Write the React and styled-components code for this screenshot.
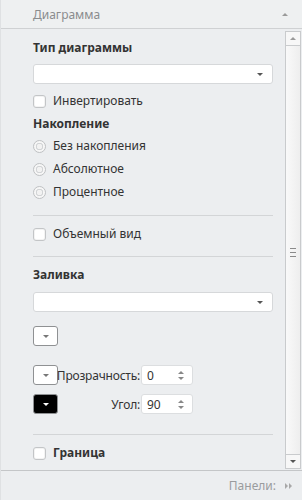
import React from 'react';
import styled, { createGlobalStyle } from 'styled-components';

const GlobalStyle = createGlobalStyle`
  html, body {
    margin: 0;
    padding: 0;
    background: #eceef0;
  }
  body {
    font-family: "Noto Sans", "Open Sans", sans-serif;
    font-size: 12px;
    color: #333;
  }
`;

const Panel = styled.div`
  width: 302px;
  height: 500px;
  display: flex;
  flex-direction: column;
  background: #eceef0;
  border-left: 1px solid #dfe1e3;
  box-sizing: border-box;
`;

const Header = styled.div`
  height: 28px;
  flex: none;
  display: flex;
  align-items: center;
  justify-content: space-between;
  padding: 0 14px 0 32px;
  border-bottom: 1px solid #cfd1d3;
  color: #8a8c8e;
  background: #eef0f1;
`;

const Caret = styled.span`
  width: 0;
  height: 0;
  border-left: 3px solid transparent;
  border-right: 3px solid transparent;
  border-${(p) => (p.$down ? 'top' : 'bottom')}: 3px solid ${(p) => p.$color || '#9a9a9a'};
`;

const Body = styled.div`
  flex: 1;
  display: flex;
  min-height: 0;
`;

const Content = styled.div`
  flex: 1;
  padding: 11px 12px 0 32px;
  display: flex;
  flex-direction: column;
`;

const Title = styled.div`
  font-weight: bold;
  line-height: 16px;
  margin-top: ${(p) => p.$mt || 0}px;
`;

const Select = styled.div`
  height: 20px;
  box-sizing: border-box;
  background: #fff;
  border: 1px solid #d6d8da;
  border-radius: 3px;
  display: flex;
  align-items: center;
  justify-content: flex-end;
  padding-right: 9px;
  margin-top: ${(p) => p.$mt || 0}px;
`;

const Row = styled.label`
  display: flex;
  align-items: center;
  gap: 7px;
  line-height: 16px;
  margin-top: ${(p) => p.$mt || 0}px;
  font-weight: ${(p) => (p.$bold ? 'bold' : 'normal')};
`;

const Check = styled.span`
  width: 13px;
  height: 13px;
  box-sizing: border-box;
  border: 1px solid #c3c5c7;
  border-radius: 3px;
  background: #fff;
  box-shadow: inset 0 0 0 1px #f3f3f3;
  flex: none;
`;

const Radio = styled.span`
  width: 13px;
  height: 13px;
  box-sizing: border-box;
  border: 1px solid #bfc1c3;
  border-radius: 50%;
  background: radial-gradient(circle, #f2f2f2 0 2.5px, #d2d4d6 3px 3.5px, #f6f6f6 4px);
  flex: none;
`;

const Divider = styled.div`
  height: 1px;
  background: #d3d5d7;
  margin-top: ${(p) => p.$mt || 0}px;
`;

const ColorButton = styled.div`
  width: 25px;
  height: 20px;
  box-sizing: border-box;
  border: 1px solid #8f9193;
  border-radius: 3px;
  background: ${(p) => (p.$black ? '#000' : '#fff')};
  display: flex;
  align-items: center;
  justify-content: center;
  flex: none;
  margin-top: ${(p) => p.$mt || 0}px;
`;

const FieldRow = styled.div`
  display: flex;
  align-items: center;
  height: 20px;
  margin-top: ${(p) => p.$mt || 0}px;
`;

const FieldLabel = styled.span`
  width: 83px;
  display: flex;
  justify-content: flex-end;
  padding-right: 1px;
  box-sizing: border-box;
  white-space: nowrap;
  letter-spacing: -0.2px;
`;

const Spinner = styled.div`
  width: 52px;
  height: 20px;
  box-sizing: border-box;
  background: #fff;
  border: 1px solid #dcdee0;
  border-radius: 3px;
  display: flex;
  align-items: center;
  justify-content: space-between;
  padding: 0 8px 0 5px;
`;

const Steps = styled.span`
  display: flex;
  flex-direction: column;
  gap: 3px;
`;

const Scrollbar = styled.div`
  width: 15px;
  flex: none;
  margin: 2px 1px 1px 0;
  display: flex;
  flex-direction: column;
  border-left: 1px solid #c9cbcd;
  background: #f3f4f5;
`;

const ScrollButton = styled.div`
  height: 15px;
  box-sizing: border-box;
  border: 1px solid #c9cbcd;
  border-left: none;
  background: #f7f7f7;
  display: flex;
  align-items: center;
  justify-content: center;
  flex: none;
`;

const Thumb = styled.div`
  flex: 1;
  box-sizing: border-box;
  border-right: 1px solid #c9cbcd;
  background: linear-gradient(to right, #f9f9f9, #eeeeee);
  display: flex;
  flex-direction: column;
  align-items: center;
  justify-content: center;
  gap: 3px;
  padding-top: 4px;
`;

const Grip = styled.span`
  width: 6px;
  height: 1px;
  background: #8a8a8a;
`;

const Footer = styled.div`
  height: 29px;
  flex: none;
  border-top: 1px solid #c4c6c8;
  display: flex;
  align-items: center;
  justify-content: flex-end;
  gap: 9px;
  padding-right: 10px;
  color: #9a9c9e;
`;

const Arrows = styled.span`
  display: flex;
  gap: 1px;
`;

const RightCaret = styled.span`
  width: 0;
  height: 0;
  border-top: 3px solid transparent;
  border-bottom: 3px solid transparent;
  border-left: 3px solid #a8a8a8;
`;

export default function App() {
  return (
    <>
      <GlobalStyle />
      <Panel>
        <Header>
          <span>Диаграмма</span>
          <Caret />
        </Header>
        <Body>
          <Content>
            <Title>Тип диаграммы</Title>
            <Select $mt={8}>
              <Caret $down $color="#555" />
            </Select>
            <Row $mt={9}>
              <Check />
              Инвертировать
            </Row>
            <Title $mt={7}>Накопление</Title>
            <Row $mt={6}>
              <Radio />
              Без накопления
            </Row>
            <Row $mt={7}>
              <Radio />
              Абсолютное
            </Row>
            <Row $mt={7}>
              <Radio />
              Процентное
            </Row>
            <Divider $mt={15} />
            <Row $mt={10}>
              <Check />
              Объемный вид
            </Row>
            <Divider $mt={14} />
            <Title $mt={10}>Заливка</Title>
            <Select $mt={9}>
              <Caret $down $color="#555" />
            </Select>
            <ColorButton $mt={14}>
              <Caret $down $color="#777" />
            </ColorButton>
            <FieldRow $mt={19}>
              <ColorButton>
                <Caret $down $color="#777" />
              </ColorButton>
              <FieldLabel>Прозрачность:</FieldLabel>
              <Spinner>
                0
                <Steps>
                  <Caret $color="#888" />
                  <Caret $down $color="#888" />
                </Steps>
              </Spinner>
            </FieldRow>
            <FieldRow $mt={9}>
              <ColorButton $black>
                <Caret $down $color="#fff" />
              </ColorButton>
              <FieldLabel>Угол:</FieldLabel>
              <Spinner>
                90
                <Steps>
                  <Caret $color="#888" />
                  <Caret $down $color="#888" />
                </Steps>
              </Spinner>
            </FieldRow>
            <Divider $mt={20} />
            <Row $mt={10} $bold>
              <Check />
              Граница
            </Row>
          </Content>
          <Scrollbar>
            <ScrollButton>
              <Caret $color="#9a9a9a" />
            </ScrollButton>
            <Thumb>
              <Grip />
              <Grip />
              <Grip />
            </Thumb>
            <ScrollButton>
              <Caret $down $color="#555" />
            </ScrollButton>
          </Scrollbar>
        </Body>
        <Footer>
          <span>Панели:</span>
          <Arrows>
            <RightCaret />
            <RightCaret />
          </Arrows>
        </Footer>
      </Panel>
    </>
  );
}
